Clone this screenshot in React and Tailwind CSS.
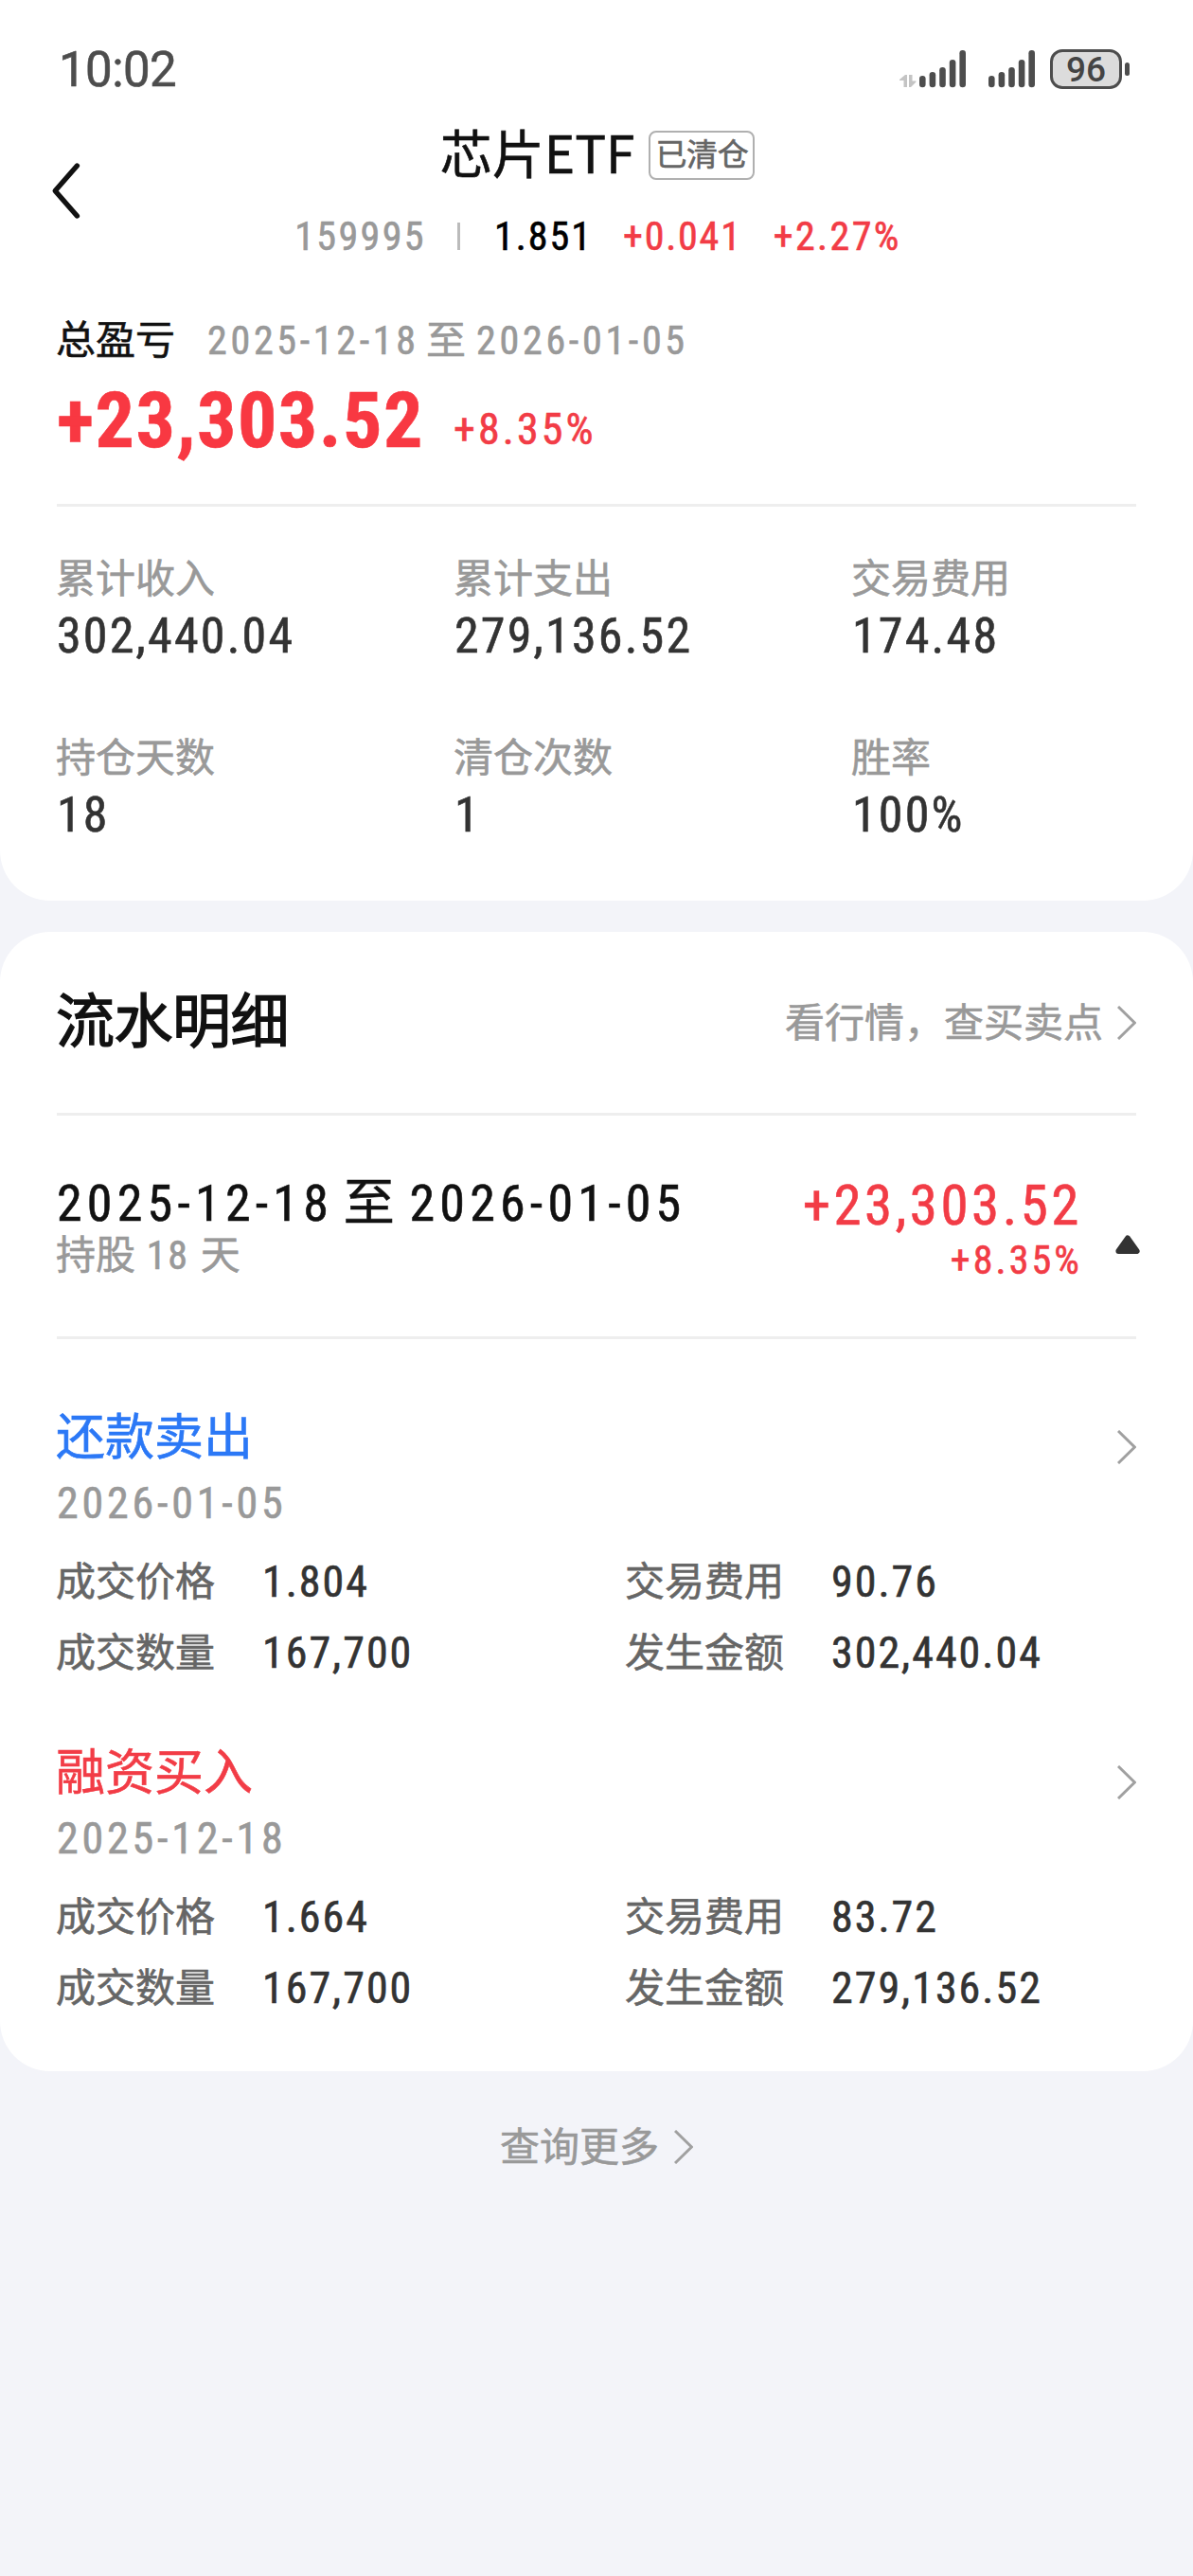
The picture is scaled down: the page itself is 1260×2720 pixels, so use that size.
import clsx from "clsx"

const stats = [
  { label: "累计收入", value: "302,440.04" },
  { label: "累计支出", value: "279,136.52" },
  { label: "交易费用", value: "174.48" },
  { label: "持仓天数", value: "18" },
  { label: "清仓次数", value: "1" },
  { label: "胜率", value: "100%" },
]

const records = [
  {
    type: "sell",
    title: "还款卖出",
    date: "2026-01-05",
    price: "1.804",
    fee: "90.76",
    count: "167,700",
    amount: "302,440.04",
  },
  {
    type: "buy",
    title: "融资买入",
    date: "2025-12-18",
    price: "1.664",
    fee: "83.72",
    count: "167,700",
    amount: "279,136.52",
  },
]

function ChevronRight({ className }) {
  return (
    <svg
      viewBox="0 0 20 36"
      className={clsx("h-[36px] w-[20px] shrink-0", className)}
      fill="none"
      stroke="#a0a0a0"
      strokeWidth="3"
    >
      <path d="M1 1 L18.4 18 L1 35" />
    </svg>
  )
}

function Signal() {
  const tops = [27, 23, 18, 10, 0]
  return (
    <svg viewBox="0 0 50 40" className="h-[40px] w-[50px]" fill="#4d4d4d">
      {tops.map((top, i) => (
        <rect key={top} x={i * 10.6} y={top} width="6.6" height={39.3 - top} rx="3.3" />
      ))}
    </svg>
  )
}

function StatusBar() {
  return (
    <div className="flex h-[124px] items-center justify-between pt-[22px] pr-[67px] pl-[62px] [font-stretch:100%]">
      <span className="text-[51px] leading-none tracking-[-0.6px] text-[#4d4d4d]">10:02</span>
      <div className="flex items-center">
        <svg viewBox="0 0 18 14" className="mt-[25px] mr-[3px] h-[14px] w-[18px]" fill="#c4c4c4">
          <path d="M8 0 V13 H4.5 V6 H0 V5 L6 0 Z" />
          <path d="M10 13 V0 H13.5 V6.5 H17.5 V7.5 L12 13 Z" />
        </svg>
        <Signal />
        <div className="ml-[23px]">
          <Signal />
        </div>
        <div className="ml-[15px] flex h-[42px] w-[76px] items-center justify-center rounded-[13px] border-[3px] border-[#4d4d4d] bg-[#dcdcdc] text-[37px] leading-none font-medium text-[#444] [-webkit-text-stroke-width:0px]">
          96
        </div>
        <div className="ml-[3px] h-[14px] w-[5px] rounded-full bg-[#4d4d4d]" />
      </div>
    </div>
  )
}

function NavBar() {
  return (
    <header className="flex h-[171px]">
      <button type="button" className="mt-[47px] h-[61px] w-[200px] pl-[54px]">
        <svg
          viewBox="0 0 32 61"
          className="h-[61px] w-[32px]"
          fill="none"
          stroke="#111"
          strokeWidth="5.4"
          strokeLinecap="round"
          strokeLinejoin="round"
        >
          <path d="M27.4 4 L4.2 30.5 L27.4 57" />
        </svg>
      </button>
      <div className="flex flex-1 flex-col items-center">
        <div className="flex h-[80px] items-center pl-[2px]">
          <h1 className="-mt-[9px] font-['Noto_Sans_CJK_SC',sans-serif] text-[55px] leading-none text-[#111]">
            芯片ETF
          </h1>
          <span className="ml-[15px] flex h-[52px] items-center rounded-[8px] border-2 border-[#b0b0b0] px-[5px] pb-px text-[33px] leading-none tracking-[-0.4px] text-[#666]">
            已清仓
          </span>
        </div>
        <div className="flex h-[91px] items-center pl-[3px] text-[42px] leading-none">
          <span className="tracking-[2.4px] text-[#999]">159995</span>
          <span className="mr-[36px] ml-[33px] h-[29px] w-[3px] bg-[#bbb]" />
          <span className="tracking-[2px] text-black">1.851</span>
          <span className="ml-[32px] tracking-[1.8px] text-[#f23c46]">+0.041</span>
          <span className="ml-[33px] tracking-[2.4px] text-[#f23c46]">+2.27%</span>
        </div>
      </div>
      <div className="w-[200px]" />
    </header>
  )
}

function Summary() {
  return (
    <section className="px-[60px] pt-[35px] pb-[60px]">
      <div className="flex h-[60px] items-center text-[42px] leading-none">
        <span className="-ml-px text-[#111]">总盈亏</span>
        <span className="ml-[34px] tracking-[3.7px] text-[#999] [word-spacing:-6px]">
          2025-12-18 至 2026-01-05
        </span>
      </div>
      <div className="flex h-[108px] items-center">
        <span className="text-[82px] leading-none font-bold tracking-[1.5px] text-[#f83842]">
          +23,303.52
        </span>
        <span className="mt-[18px] ml-[31px] text-[46px] leading-none tracking-[3.1px] text-[#f23c46]">
          +8.35%
        </span>
      </div>
      <div className="mt-[34px] h-[3px] bg-[#eee]" />
      <div className="mt-[47px] grid grid-cols-[420px_420px_1fr] gap-y-[69px]">
        {stats.map((s) => (
          <div key={s.label}>
            <div className="-ml-px text-[42px] leading-[60px] text-[#999]">{s.label}</div>
            <div className="text-[52px] leading-[60px] tracking-[2.2px] text-[#333]">{s.value}</div>
          </div>
        ))}
      </div>
    </section>
  )
}

function Field({ label, value }) {
  return (
    <div className="flex h-[75px] items-center leading-none">
      <span className="-ml-px w-[218px] pt-[2px] text-[42px] text-[#666]">{label}</span>
      <span className="text-[46px] tracking-[2px] text-[#333]">{value}</span>
    </div>
  )
}

function TradeRecord({ record }) {
  return (
    <article>
      <div className="flex justify-between">
        <div>
          <h3
            className={clsx(
              "-ml-px pt-[3px] text-[52px] leading-[63px]",
              record.type === "sell" ? "text-[#2b78f6]" : "text-[#f23c46]"
            )}
          >
            {record.title}
          </h3>
          <div className="text-[46px] leading-[74px] tracking-[3.8px] text-[#999]">{record.date}</div>
        </div>
        <ChevronRight className="mt-[26px]" />
      </div>
      <div className="mt-[8px] grid grid-cols-[601px_1fr]">
        <Field label="成交价格" value={record.price} />
        <Field label="交易费用" value={record.fee} />
        <Field label="成交数量" value={record.count} />
        <Field label="发生金额" value={record.amount} />
      </div>
    </article>
  )
}

function Details() {
  return (
    <section className="mt-[33px] rounded-[53px] bg-white px-[60px] pb-[51px]">
      <div className="flex h-[191px] items-center justify-between">
        <h2 className="-ml-px text-[62px] leading-none tracking-[-0.5px] text-[#111] [-webkit-text-stroke-width:1.4px]">
          流水明细
        </h2>
        <div className="flex items-center text-[42px] leading-none text-[#999]">
          <span className="pt-[2px]">看行情，查买卖点</span>
          <ChevronRight className="ml-[15px]" />
        </div>
      </div>
      <div className="h-[3px] bg-[#eee]" />

      {/* Holding period */}
      <div className="flex h-[233px] pt-[62px]">
        <div className="flex-1">
          <div className="text-[54px] leading-[62px] tracking-[5.2px] text-[#111] [word-spacing:-7px]">
            2025-12-18 至 2026-01-05
          </div>
          <div className="-ml-px text-[42px] leading-[48px] text-[#999] [word-spacing:2px]">
            持股 <span className="tracking-[2px]">18</span> 天
          </div>
        </div>
        <div className="pt-[1px] text-right text-[#f23c46]">
          <div className="-mr-[3px] text-[59px] leading-[64px] tracking-[3.5px]">+23,303.52</div>
          <div className="-mr-[3px] text-[42px] leading-[52px] tracking-[3.1px]">+8.35%</div>
        </div>
        <svg
          viewBox="0 0 26 20"
          className="mt-[64px] -mr-[4px] ml-[38px] h-[20px] w-[26px]"
          fill="#333"
          stroke="#333"
          strokeWidth="6"
          strokeLinejoin="round"
        >
          <path d="M13 3.5 L22.6 17 H3.4 Z" />
        </svg>
      </div>
      <div className="h-[3px] bg-[#eee]" />

      <div className="flex flex-col gap-[56px] pt-[70px]">
        {records.map((r) => (
          <TradeRecord key={r.title} record={r} />
        ))}
      </div>
    </section>
  )
}

export default function App() {
  return (
    <main className="min-h-[2720px] w-[1260px] bg-[#f3f4f9] font-['Roboto','Noto_Sans_CJK_SC',sans-serif] [font-stretch:85%] [-webkit-text-stroke:0.6px_currentColor]">
      <div className="rounded-b-[53px] bg-white">
        <StatusBar />
        <NavBar />
        <Summary />
      </div>
      <Details />
      <div className="flex h-[160px] items-center justify-center text-[42px] leading-none text-[#999]">
        <span className="pt-[2px]">查询更多</span>
        <ChevronRight className="ml-[16px]" />
      </div>
    </main>
  )
}
